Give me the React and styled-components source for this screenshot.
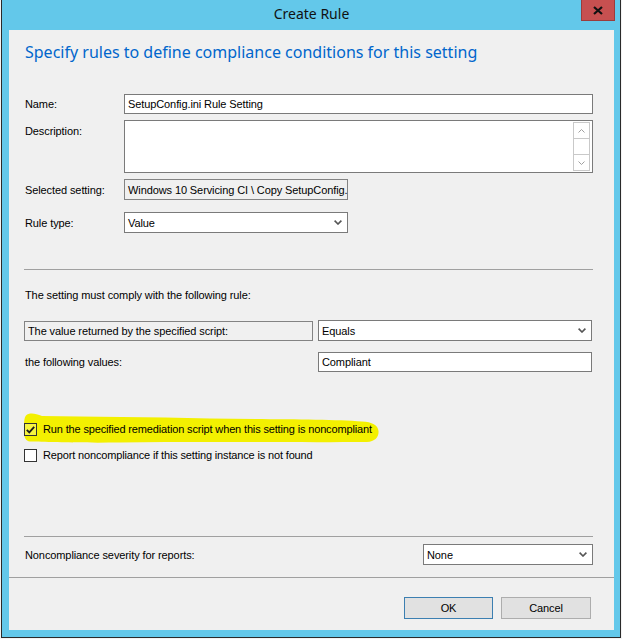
import React from 'react';
import styled, { createGlobalStyle } from 'styled-components';

const Global = createGlobalStyle`
  html, body { margin: 0; padding: 0; background: #f3f3f3; }
  body {
    width: 622px; height: 639px; overflow: hidden;
    font-family: "Liberation Sans", Arial, sans-serif;
    font-size: 11px; color: #000;
  }
  * { box-sizing: border-box; }
`;

const Desktop = styled.div`
  width: 622px; height: 639px; padding-left: 1px; background: #f3f3f3;
`;

const Window = styled.div`
  width: 620px; height: 638px;
  background: #63c8ea;
  border: 1px solid #2a2a2a; border-top: none;
  padding: 0 6px 7px 7px;
  display: flex; flex-direction: column;
`;

const TitleBar = styled.div`
  height: 30px; flex: none;
  display: grid; grid-template-columns: 1fr auto 1fr;
`;

const Title = styled.div`
  grid-column: 2;
  font-family: "Noto Sans", "Open Sans", sans-serif;
  font-size: 14px; line-height: 30px; color: #111;
  margin-top: -1px;
`;

const CloseButton = styled.div`
  grid-column: 3; justify-self: end; align-self: start;
  width: 34px; height: 21px; margin-right: -1px;
  background: #c75050;
  border: 1px solid #9b3c3c; border-top: none;
  display: flex; align-items: center; justify-content: center;
`;

const Panel = styled.div`
  flex: 1; background: #f0f0f0;
  display: flex; flex-direction: column;
`;

const Heading = styled.div`
  margin: 12px 0 0 16px;
  font-family: "Noto Sans", "Open Sans", sans-serif;
  font-size: 16px; line-height: 20px; color: #0066cc;
`;

const Body = styled.div`
  padding: 0 21px 0 16px;
  display: flex; flex-direction: column;
`;

const Row = styled.div`
  display: flex; align-items: ${p => p.$top ? 'flex-start' : 'center'};
  margin-top: ${p => p.$mt || 0}px;
  position: relative;
  justify-content: ${p => p.$between ? 'space-between' : 'flex-start'};
`;

const Label = styled.div`
  width: ${p => p.$w || 99}px; flex: none;
  line-height: 14px; letter-spacing: -0.1px;
  padding-top: ${p => p.$pt || 0}px;
  white-space: nowrap;
`;

const Text = styled.div`
  line-height: 14px; letter-spacing: -0.1px; white-space: nowrap;
  margin-top: ${p => p.$mt || 0}px;
`;

const Box = styled.div`
  height: ${p => p.$h || 20}px;
  ${p => p.$w ? `width: ${p.$w}px; flex: none;` : 'flex: 1;'}
  border: 1px solid ${p => p.$ro ? '#838383' : '#7a7a7a'};
  background: ${p => p.$ro ? '#f0f0f0' : '#fff'};
  padding-left: 3px;
  display: flex; align-items: center;
  white-space: nowrap;
  letter-spacing: -0.1px;
  margin-left: ${p => p.$ml || 0}px;
  margin-right: ${p => p.$mr || 0}px;
`;

const SelectBox = styled(Box)`
  justify-content: space-between;
  padding-right: ${p => p.$pr || 6}px;
`;

const TextArea = styled.div`
  flex: 1; height: 53px;
  border: 1px solid #7a7a7a; background: #fff;
  display: flex; justify-content: flex-end;
  padding: 1px 2px 1px 0;
`;

const ScrollBar = styled.div`
  width: 17px; height: 49px;
  border: 1px solid #c9c9c9;
  display: flex; flex-direction: column; justify-content: space-between;
`;

const ScrollBtn = styled.div`
  height: 16px;
  display: flex; align-items: center; justify-content: center;
  border-${p => p.$up ? 'bottom' : 'top'}: 1px solid #c9c9c9;
`;

const Separator = styled.div`
  height: 1px; background: #a0a0a0;
  margin-top: ${p => p.$mt || 0}px;
  margin-left: -1px;
`;

const FullSeparator = styled.div`
  height: 1px; background: #a0a0a0; margin-top: ${p => p.$mt}px;
`;

const CheckBox = styled.div`
  width: 13px; height: 13px; flex: none;
  margin-left: -1px; margin-right: 6px;
  border: 1px solid #333;
  background: ${p => p.$checked ? 'rgba(255,255,255,0.25)' : '#fff'};
  display: flex; align-items: center; justify-content: center;
  position: relative; z-index: 1;
`;

const CheckText = styled.div`
  line-height: 13px; letter-spacing: -0.15px; white-space: nowrap;
  position: relative; z-index: 1;
`;

const Highlight = styled.svg`
  position: absolute; left: -3px; top: -11px;
  width: 360px; height: 34px; z-index: 0;
`;

const Footer = styled.div`
  display: flex; justify-content: flex-end; gap: 8px;
  padding-right: 23px; margin-top: 19px;
`;

const Button = styled.div`
  width: ${p => p.$w}px; height: 22px;
  background: #e1e1e1;
  border: 1px solid ${p => p.$default ? '#3c7fb1' : '#adadad'};
  display: flex; align-items: center; justify-content: center;
  letter-spacing: -0.1px;
`;

const Chevron = () => (
  <svg width="8" height="5" viewBox="0 0 8 5">
    <path d="M0.6 0.6 L4 4 L7.4 0.6" fill="none" stroke="#555" strokeWidth="1.6" />
  </svg>
);

const SmallArrow = ({ up }) => (
  <svg width="7" height="4" viewBox="0 0 7 4">
    <path d={up ? 'M0.5 3.5 L3.5 0.5 L6.5 3.5' : 'M0.5 0.5 L3.5 3.5 L6.5 0.5'} fill="none" stroke="#a0a0a0" strokeWidth="1" />
  </svg>
);

export default function App() {
  return (
    <>
      <Global />
      <Desktop>
        <Window>
          <TitleBar>
            <Title>Create Rule</Title>
            <CloseButton>
              <svg width="10" height="9" viewBox="0 0 10 9">
                <path d="M1 1 L9 8 M9 1 L1 8" stroke="#111" strokeWidth="2.2" />
              </svg>
            </CloseButton>
          </TitleBar>
          <Panel>
            <Heading>Specify rules to define compliance conditions for this setting</Heading>
            <Body>
              <Row $mt={32}>
                <Label>Name:</Label>
                <Box>SetupConfig.ini Rule Setting</Box>
              </Row>
              <Row $mt={6} $top>
                <Label $pt={4}>Description:</Label>
                <TextArea>
                  <ScrollBar>
                    <ScrollBtn $up><SmallArrow up /></ScrollBtn>
                    <ScrollBtn><SmallArrow /></ScrollBtn>
                  </ScrollBar>
                </TextArea>
              </Row>
              <Row $mt={6}>
                <Label>Selected setting:</Label>
                <Box $w={224} $h={21} $ro>Windows 10 Servicing CI \ Copy SetupConfig.</Box>
              </Row>
              <Row $mt={12}>
                <Label>Rule type:</Label>
                <SelectBox $w={224} $h={21} $pr={5}>Value<Chevron /></SelectBox>
              </Row>
              <Separator $mt={36} />
              <Text $mt={18}>The setting must comply with the following rule:</Text>
              <Row $mt={18}>
                <Box $w={289} $h={20} $ml={-1} $ro>The value returned by the specified script:</Box>
                <SelectBox $h={21} $ml={5} $mr={1} $pr={5}>Equals<Chevron /></SelectBox>
              </Row>
              <Row $mt={11}>
                <Label $w={293}>the following values:</Label>
                <Box $h={20} $mr={1}>Compliant</Box>
              </Row>
              <Row $mt={51}>
                <Highlight viewBox="22 412 360 34">
                  <path
                    d="M26 415.5 C29 412.5 35 413 42 416 C90 417 150 417 210 418.5 C270 419.5 330 419 362 421.5 C372 422 378 425 378.5 431 C379 437 375 441.5 367 442 C300 442.5 200 441.5 120 442.5 C80 443 45 442 30 441.5 C25 441 23.5 436 24 429 C24 423 24 418 26 415.5 Z"
                    fill="#f3f000"
                  />
                </Highlight>
                <CheckBox $checked>
                  <svg width="9" height="8" viewBox="0 0 9 8">
                    <path d="M0.8 3.8 L3.3 6.4 L8.2 0.9" fill="none" stroke="#1a1a1a" strokeWidth="1.8" />
                  </svg>
                </CheckBox>
                <CheckText>Run the specified remediation script when this setting is noncompliant</CheckText>
              </Row>
              <Row $mt={13}>
                <CheckBox />
                <CheckText>Report noncompliance if this setting instance is not found</CheckText>
              </Row>
              <Separator $mt={74} />
              <Row $mt={7} $between>
                <Text>Noncompliance severity for reports:</Text>
                <SelectBox $w={170} $h={21} $pr={5}>None<Chevron /></SelectBox>
              </Row>
            </Body>
            <FullSeparator $mt={12} />
            <Footer>
              <Button $w={89} $default>OK</Button>
              <Button $w={90}>Cancel</Button>
            </Footer>
          </Panel>
        </Window>
      </Desktop>
    </>
  );
}
